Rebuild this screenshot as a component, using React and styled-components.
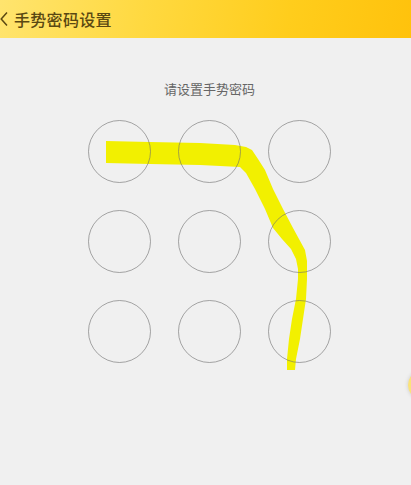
import React from "react";
import styled, { createGlobalStyle } from "styled-components";

const GlobalStyle = createGlobalStyle`
	html, body {
		margin: 0;
		padding: 0;
		background: #f0f0f0;
		overflow: hidden;
	}
	body {
		font-family: "Noto Sans CJK SC", "Noto Sans", sans-serif;
	}
`;

// outline of the finger trace, page coordinates
const stroke = [
	[106, 142], [150, 143], [200, 144], [235, 146], [246, 148], [252, 151],
	[258, 160], [265, 171], [273, 190], [283, 210], [293, 229], [299, 240],
	[305, 251], [307, 262], [307, 280], [306, 300], [303, 320], [300, 340],
	[296, 360], [295, 371],
	[287, 371], [287, 360], [289, 340], [292, 320], [296, 300], [298, 280],
	[298, 270], [296, 260], [291, 250], [282, 240], [273, 229], [265, 210],
	[255, 190], [246, 174], [240, 168], [200, 166], [150, 165], [106, 164],
];

export default function App() {
	const dots = Array.from({ length: 9 });

	return (
		<Page>
			<GlobalStyle />
			<Header>
				<Back viewBox="0 0 8 16" aria-hidden="true">
					<path d="M7 1.5 L1.2 8 L7 14.5" />
				</Back>
				<HeaderTitle>手势密码设置</HeaderTitle>
			</Header>

			<Hint>请设置手势密码</Hint>

			<Pad>
				<Trace viewBox="88 121 243 243" aria-hidden="true">
					<polygon points={stroke.map((p) => p.join(",")).join(" ")} />
				</Trace>
				{dots.map((_, i) => (
					<Dot key={i} />
				))}
			</Pad>

			<FloatButton />
		</Page>
	);
}

const Page = styled.div`
	position: relative;
	width: 411px;
	height: 485px;
	background: #f0f0f0;
	overflow: hidden;
`;

const Header = styled.header`
	display: flex;
	align-items: center;
	gap: 6px;
	height: 38px;
	background: linear-gradient(100deg, #ffe46e 0%, #ffd940 35%, #ffcd1c 70%, #ffc20c 100%);
`;

const Back = styled.svg`
	width: 8px;
	height: 16px;
	fill: none;
	stroke: #5a4812;
	stroke-width: 1.5;
`;

const HeaderTitle = styled.h1`
	margin: 0;
	font-size: 16px;
	font-weight: 500;
	color: #5a4812;
	letter-spacing: 0.3px;
`;

const Hint = styled.p`
	margin: 44px 0 0;
	text-align: center;
	font-size: 13px;
	line-height: 14px;
	color: #666666;
	padding-left: 8px;
`;

const Pad = styled.div`
	position: relative;
	display: grid;
	grid-template-columns: repeat(3, 63px);
	grid-auto-rows: 63px;
	gap: 27px;
	width: 243px;
	margin: 24px 0 0 88px;
`;

const Trace = styled.svg`
	position: absolute;
	left: 0;
	top: 0;
	width: 243px;
	height: 243px;
	overflow: visible;
	fill: #f2f000;
	z-index: 0;
`;

const Dot = styled.div`
	position: relative;
	z-index: 1;
	box-sizing: border-box;
	width: 63px;
	height: 63px;
	border: 1.6px solid rgba(110, 110, 110, 0.6);
	border-radius: 50%;
`;

const FloatButton = styled.div`
	position: absolute;
	left: 408px;
	top: 370px;
	width: 30px;
	height: 30px;
	border-radius: 50%;
	background: #fbe37a;
	box-shadow: 0 0 4px rgba(0, 0, 0, 0.15);
`;
